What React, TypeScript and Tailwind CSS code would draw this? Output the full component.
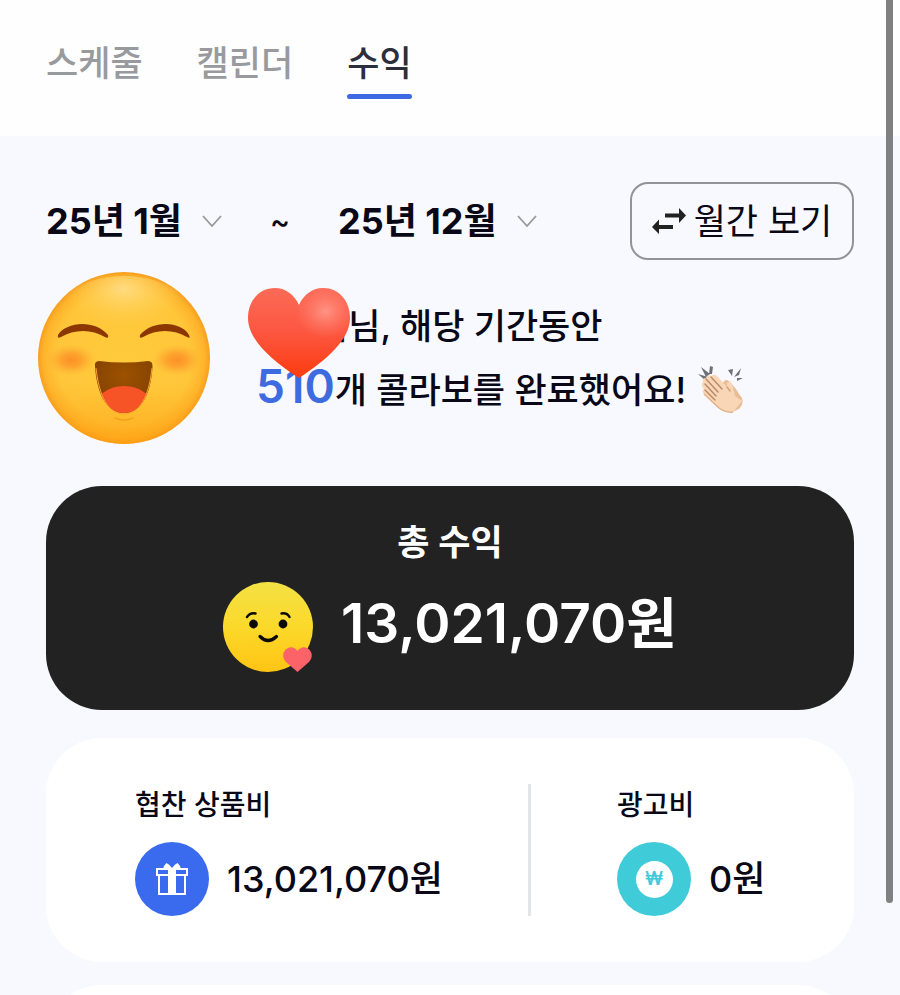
import { useState } from "react";

const MONTHS = ["1월", "2월", "3월", "4월", "5월", "6월", "7월", "8월", "9월", "10월", "11월", "12월"];

function LaughingFace() {
  return (
    <svg viewBox="0 0 172 172" className="size-[172px] shrink-0" aria-hidden="true">
      <defs>
        <radialGradient id="laugh-base" cx="0.5" cy="0.5" r="0.5">
          <stop offset="0" stopColor="#ffca3c" />
          <stop offset="0.78" stopColor="#ffc63a" />
          <stop offset="0.93" stopColor="#feb52c" />
          <stop offset="1" stopColor="#f79f20" />
        </radialGradient>
        <radialGradient id="laugh-shine" cx="0.5" cy="0.14" r="0.42">
          <stop offset="0" stopColor="#ffe08f" stopOpacity="0.85" />
          <stop offset="1" stopColor="#ffd050" stopOpacity="0" />
        </radialGradient>
        <linearGradient id="laugh-low" x1="0" y1="0" x2="0" y2="1">
          <stop offset="0.65" stopColor="#ffa010" stopOpacity="0" />
          <stop offset="1" stopColor="#ff9c0c" stopOpacity="0.6" />
        </linearGradient>
        <radialGradient id="laugh-cheek">
          <stop offset="0" stopColor="#fb8421" stopOpacity="0.8" />
          <stop offset="0.4" stopColor="#fb8a24" stopOpacity="0.6" />
          <stop offset="1" stopColor="#fda52c" stopOpacity="0" />
        </radialGradient>
        <radialGradient id="laugh-mouth" cx="0.5" cy="0.35" r="0.6">
          <stop offset="0" stopColor="#9c5200" />
          <stop offset="1" stopColor="#7f3d00" />
        </radialGradient>
        <clipPath id="laugh-clip">
          <path d="M61 89Q86 92 110 89Q115 89 114.500 95C113 122 103 141 86 141C69 141 59 122 57 95Q56 89 61 89Z" />
        </clipPath>
      </defs>
      <circle cx="86" cy="86" r="86" fill="url(#laugh-base)" />
      <circle cx="86" cy="86" r="86" fill="url(#laugh-low)" />
      <ellipse cx="86" cy="50" rx="72" ry="46" fill="url(#laugh-shine)" />
      <ellipse cx="33" cy="88" rx="25" ry="16" fill="url(#laugh-cheek)" />
      <ellipse cx="139" cy="88" rx="25" ry="16" fill="url(#laugh-cheek)" />
      <path d="M20 63C28 50 56 47 70 63Q71 67 67 65C54 57 36 57 23 65Q19 67 20 63Z" fill="#8c3600" />
      <path d="M102 63C116 47 144 50 151 63Q153 67 149 65C136 57 118 57 105 65Q101 67 102 63Z" fill="#8c3600" />
      <g clipPath="url(#laugh-clip)">
        <rect x="50" y="80" width="72" height="66" fill="url(#laugh-mouth)" />
        <ellipse cx="86" cy="138" rx="30" ry="24" fill="#f65327" />
      </g>
      <path d="M58 96C61 124 70 142 86 142C102 142 111 124 114 96" fill="none" stroke="#ffa22e" strokeWidth="1" />
      <path d="M77 146Q86 150 95 146" fill="none" stroke="#f3a01d" strokeWidth="1.500" strokeLinecap="round" />
    </svg>
  );
}

function RedHeart() {
  return (
    <svg viewBox="0 0 102 90" className="absolute -left-2 -top-1.5 h-[90px] w-[102px]" aria-hidden="true">
      <defs>
        <linearGradient id="heart-base" x1="0" y1="0" x2="0" y2="1">
          <stop offset="0" stopColor="#fb6b57" />
          <stop offset="0.5" stopColor="#fc5640" />
          <stop offset="1" stopColor="#fd3c0e" />
        </linearGradient>
        <radialGradient id="heart-shine" cx="0.76" cy="0.26" r="0.3">
          <stop offset="0" stopColor="#ff9486" />
          <stop offset="1" stopColor="#ff7a68" stopOpacity="0" />
        </radialGradient>
      </defs>
      <path d="M51 17C46 6 37 0 27 0C11 0 0 13 0 30C0 51 22 71 51 90C80 71 102 51 102 30C102 13 91 0 75 0C65 0 56 6 51 17Z" fill="url(#heart-base)" />
      <path d="M51 17C46 6 37 0 27 0C11 0 0 13 0 30C0 51 22 71 51 90C80 71 102 51 102 30C102 13 91 0 75 0C65 0 56 6 51 17Z" fill="url(#heart-shine)" />
    </svg>
  );
}

function ClappingHands() {
  return (
    <svg viewBox="0 0 46 48" className="mb-2 ml-3 inline-block h-12 w-[46px] align-middle" aria-hidden="true">
      <g fill="#6d7176">
        <path d="M0 9L10 12L8 16Z" />
        <path d="M3 2L12 9L8 12Z" />
        <path d="M12 1L15 2L14 9L11 9Z" />
        <path d="M30 5L35 4L34 11Z" />
        <path d="M43 3L41 10L36 12Z" />
        <path d="M45 13L39 16L39 13Z" />
      </g>
      <path d="M25 18Q27 13 31 16L38 24Q40 28 44 33Q46 39 41 44L34 47L22 34Z" fill="#eabd97" />
      <path d="M5 17Q4 13 8 13Q9 9 13 11Q17 8 20 12L29 22L29 18Q32 14 34 19L37 31Q41 34 44 36L35 47Q27 48 21 43L6 29Q3 26 6 24Q2 20 5 17Z" fill="#f8d6b6" />
      <path d="M8 14L20 27M13 12L24 24M7 19L18 31M7 25L17 35" fill="none" stroke="#b98d6b" strokeWidth="1.500" strokeLinecap="round" />
      <path d="M6 29L21 43Q28 48 35 47" fill="none" stroke="#e3b28a" strokeWidth="1.500" />
      <path d="M29 22L32 26" stroke="#d5a27b" strokeWidth="1.500" strokeLinecap="round" />
    </svg>
  );
}

function LovingFace() {
  return (
    <svg viewBox="0 0 90 90" className="size-[90px] shrink-0" aria-hidden="true">
      <defs>
        <linearGradient id="love-base" x1="0" y1="0" x2="0" y2="1">
          <stop offset="0" stopColor="#f4e144" />
          <stop offset="0.5" stopColor="#fbd92a" />
          <stop offset="1" stopColor="#ffc414" />
        </linearGradient>
      </defs>
      <circle cx="45" cy="45" r="45" fill="url(#love-base)" />
      <circle cx="30.500" cy="42" r="4.400" fill="#0c0a05" />
      <circle cx="60" cy="42" r="4.400" fill="#0c0a05" />
      <g fill="none" stroke="#0c0a05" strokeLinecap="round">
        <path d="M24 35Q27 30.500 32.500 31.500" strokeWidth="2.400" />
        <path d="M58.500 31.500Q64 30.500 66.500 35" strokeWidth="2.400" />
        <path d="M37 54.500Q45 62.500 53.500 54.500" strokeWidth="3.200" />
      </g>
      <path d="M74.500 69C72 65 68 64.500 65 66C59 69 59 76 63 80L74.500 90L86 80C90 76 90 69 84 66C81 64.500 77 65 74.500 69Z" fill="#fc6368" />
    </svg>
  );
}

function SwapArrows() {
  return (
    <svg viewBox="0 0 34 26" className="h-[26px] w-[34px]" fill="#222" aria-hidden="true">
      <path d="M13 5.500H27V0L34 7.500L27 15V9.500H13Z" />
      <path d="M21 17H7V11.500L0 19L7 26V21H21Z" />
    </svg>
  );
}

function GiftIcon() {
  return (
    <svg viewBox="0 0 32 34" className="h-[34px] w-8" aria-hidden="true">
      <g fill="none" stroke="#fff" strokeWidth="2">
        <path d="M1 7H31V13H1Z" />
        <path d="M3 13V32H29V13" />
      </g>
      <path d="M12 7H20V32H12Z" fill="#fff" />
      <path d="M7 7Q8 3 10.500 1Q13 2 16 6Q19 2 21.500 1Q24 3 25 7Z" fill="#fff" />
    </svg>
  );
}

function MonthSelect({ label, value }: { label: string; value: string }) {
  const [month, setMonth] = useState(value);
  return (
    <label className="flex items-center gap-5">
      <select
        aria-label={label}
        value={month}
        onChange={(e) => setMonth(e.target.value)}
        className="field-sizing-content appearance-none bg-transparent text-4xl leading-[48px] font-bold outline-none"
      >
        {MONTHS.map((m) => (
          <option key={m} value={m}>{`25년 ${m}`}</option>
        ))}
      </select>
      <svg viewBox="0 0 20 12" className="h-3 w-5" fill="none" stroke="#999" strokeWidth="1.800" aria-hidden="true">
        <path d="M1 1L10 11L19 1" />
      </svg>
    </label>
  );
}

export default function App() {
  return (
    <div className="h-screen overflow-y-auto bg-[#f8f9fe] font-[Inter,'Noto_Sans_CJK_KR',sans-serif] text-[#080817] [scrollbar-width:none]">
      <header className="h-[136px] bg-[#fefefe] px-[46px] pt-9">
        <nav className="flex gap-[54px] text-[35px] leading-[54px] font-medium text-[#999a9e]">
          <a href="#schedule">스케줄</a>
          <a href="#calendar">캘린더</a>
          <a href="#revenue" aria-current="page" className="text-[#2c2e3c]">
            수익
            <span className="mt-1 block h-[5px] rounded-full bg-[#3f69e2]" />
          </a>
        </nav>
      </header>

      <main className="px-[46px] pt-[46px]">
        <div className="flex items-center justify-between">
          <div className="flex items-center">
            <MonthSelect label="시작 월" value="1월" />
            <span className="mx-12 text-3xl font-medium">~</span>
            <MonthSelect label="종료 월" value="12월" />
          </div>
          <button className="flex h-[78px] w-56 items-center justify-center gap-2 rounded-[18px] border-2 border-[#929397] text-[35px]">
            <SwapArrows />
            월간 보기
          </button>
        </div>

        <section className="-ml-2 mt-3 flex items-start">
          <LaughingFace />
          <div className="relative ml-[46px] mt-[22px] text-[35px] leading-[64px] font-medium">
            <p className="pl-[60px]">이님, 해당 기간동안</p>
            <p>
              <strong className="text-[46px] leading-none font-semibold text-[#3f6be0]">510</strong>
              개 콜라보를 완료했어요!
              <ClappingHands />
            </p>
            <RedHeart />
          </div>
        </section>

        <section className="mt-[42px] flex h-56 flex-col items-center rounded-[56px] bg-[#222] pt-8 text-white">
          <h2 className="text-[35px] leading-[48px] font-semibold">총 수익</h2>
          <div className="mt-4 flex items-start gap-7">
            <LovingFace />
            <p className="text-[55px] leading-[82px] font-semibold">13,021,070원</p>
          </div>
        </section>

        <section className="mt-7 grid h-56 grid-cols-[485fr_323fr] rounded-[56px] bg-white py-[46px]">
          <div className="border-r-3 border-[#e3e4e7] pl-[89px]">
            <h3 className="text-[28px] leading-[42px] font-medium">협찬 상품비</h3>
            <div className="mt-4 flex items-center gap-[18px]">
              <span className="flex size-[74px] items-center justify-center rounded-full bg-[#3a6bee]">
                <GiftIcon />
              </span>
              <p className="text-4xl font-medium">13,021,070원</p>
            </div>
          </div>
          <div className="pl-[86px]">
            <h3 className="text-[28px] leading-[42px] font-medium">광고비</h3>
            <div className="mt-4 flex items-center gap-[18px]">
              <span className="flex size-[74px] items-center justify-center rounded-full bg-[#40cbd9]">
                <span className="flex size-[37px] items-center justify-center rounded-full bg-white text-lg leading-none font-semibold text-[#40cbd9]">
                  ₩
                </span>
              </span>
              <p className="text-4xl font-medium">0원</p>
            </div>
          </div>
        </section>

        <section className="mt-[23px] h-56 rounded-[56px] bg-white" />
      </main>

      <div className="fixed top-0 right-[7px] h-[903px] w-[7px] rounded-b-full bg-[#808080]" />
    </div>
  );
}
